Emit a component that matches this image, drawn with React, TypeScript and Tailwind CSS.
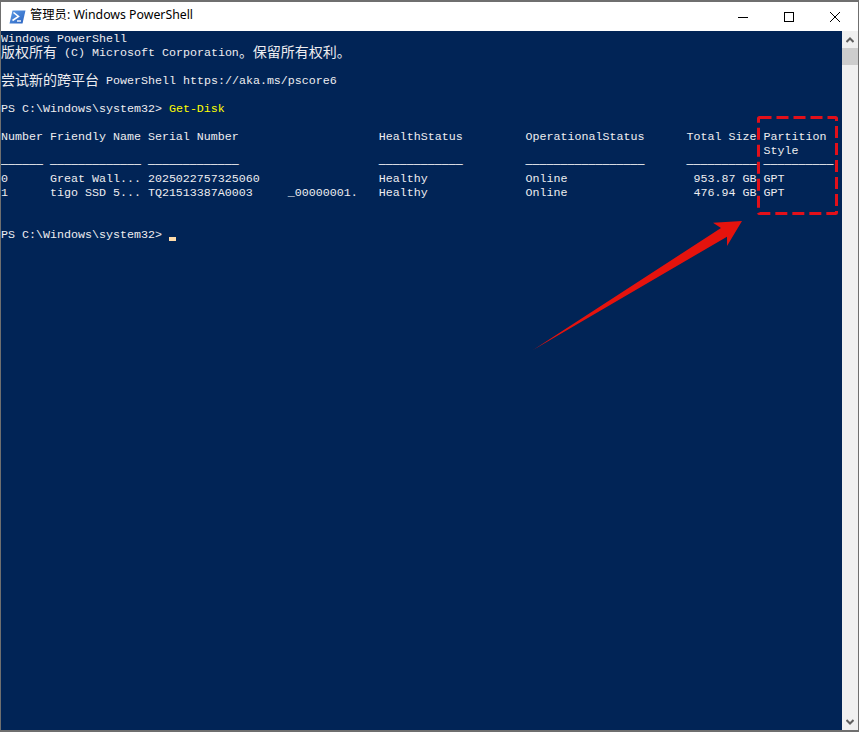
import React from 'react';

const Cjk = ({ children }: { children: React.ReactNode }) => (
  <span className="inline-block h-[14px] align-top text-[14px] leading-[10px] font-['Noto_Sans_CJK_SC',sans-serif]">{children}</span>
);

const rows: React.ReactNode[] = [
  'Windows PowerShell',
  <><Cjk>版权所有</Cjk> (C) Microsoft Corporation<Cjk>。保留所有权利。</Cjk></>,
  '',
  <><Cjk>尝试新的跨平台</Cjk> PowerShell https://aka.ms/pscore6</>,
  '',
  <>PS C:\Windows\system32&gt; <span className="text-[#ffff00]">Get-Disk</span></>,
  '',
  'Number Friendly Name Serial Number                    HealthStatus         OperationalStatus      Total Size Partition',
  '                                                                                                             Style',
  '────── ───────────── ─────────────                    ────────────         ─────────────────      ────────── ──────────',
  '0      Great Wall... 2025022757325060                 Healthy              Online                  953.87 GB GPT',
  '1      tigo SSD 5... TQ21513387A0003     _00000001.   Healthy              Online                  476.94 GB GPT',
  '',
  '',
  <>PS C:\Windows\system32&gt; <span className="inline-block w-[7px] h-[14px] align-top relative"><span className="absolute left-0 bottom-[1px] w-[7px] h-[4px] bg-[#fedba9]" /></span></>,
];

function PsIcon() {
  return (
    <svg width="17" height="14" viewBox="0 0 17 14">
      <defs>
        <linearGradient id="ps" x1="0" y1="0" x2="1" y2="1">
          <stop offset="0" stopColor="#5b9be6" />
          <stop offset="1" stopColor="#2a62c0" />
        </linearGradient>
      </defs>
      <path d="M3.5 0.5H16.5L13.5 13.5H0.5Z" fill="url(#ps)" />
      <path d="M4.5 2.5L9.5 6.5L3.5 10.5" fill="none" stroke="#fff" strokeWidth="1.6" />
      <path d="M8 11H12" stroke="#fff" strokeWidth="1.4" />
    </svg>
  );
}

export default function App() {
  return (
    <div className="relative w-[859px] h-[732px] flex flex-col bg-white border border-b-2 border-t-2 border-[#6f6f6f] overflow-hidden">
      <div className="h-[29px] flex items-center shrink-0 bg-white">
        <div className="ml-[8px] mr-[4px] flex"><PsIcon /></div>
        <span className="mt-[-2px] text-[12.3px] text-black font-['Noto_Sans','Noto_Sans_CJK_SC',sans-serif]">管理员: Windows PowerShell</span>
        <div className="ml-auto flex h-full items-center text-black">
          <div className="w-[46px] flex justify-center">
            <svg width="10" height="10" viewBox="0 0 10 10"><path d="M0 5.5H10" stroke="#000" /></svg>
          </div>
          <div className="w-[46px] flex justify-center">
            <svg width="10" height="10" viewBox="0 0 10 10"><rect x="0.5" y="0.5" width="9" height="9" fill="none" stroke="#000" /></svg>
          </div>
          <div className="w-[46px] flex justify-center">
            <svg width="10" height="10" viewBox="0 0 10 10"><path d="M0 0L10 10M10 0L0 10" stroke="#000" /></svg>
          </div>
        </div>
      </div>
      <div className="flex flex-1 min-h-0">
        <pre className="flex-1 pt-[1px] bg-[#012456] text-[#eeedf0] text-[11.67px] leading-[14px] font-['Liberation_Mono','Noto_Sans_CJK_SC',monospace] whitespace-pre overflow-hidden">
          {rows.map((r, i) => <div key={i} className="h-[14px]">{r}</div>)}
        </pre>
        <div className="w-[16px] shrink-0 bg-[#f0f0f0] flex flex-col">
          <div className="h-[17px] flex items-center justify-center">
            <svg width="8" height="6" viewBox="0 0 8 6"><path d="M0.5 5L4 1.5L7.5 5" fill="none" stroke="#606060" strokeWidth="2" /></svg>
          </div>
          <div className="h-[17px] bg-[#cdcdcd]" />
          <div className="mt-auto h-[17px] flex items-center justify-center">
            <svg width="8" height="6" viewBox="0 0 8 6"><path d="M0.5 1L4 4.5L7.5 1" fill="none" stroke="#606060" strokeWidth="2" /></svg>
          </div>
        </div>
      </div>
      <svg className="absolute left-[-1px] top-[-2px] pointer-events-none" width="859" height="732" viewBox="0 0 859 732">
        <rect x="758.5" y="117.5" width="78" height="96" rx="1" fill="none" stroke="#e2101a" strokeWidth="3" strokeDasharray="12 5" />
        <path d="M533 350L721 228L713 222.7L742 221L727 246L727 236.7Z" fill="#e5130d" />
      </svg>
    </div>
  );
}
